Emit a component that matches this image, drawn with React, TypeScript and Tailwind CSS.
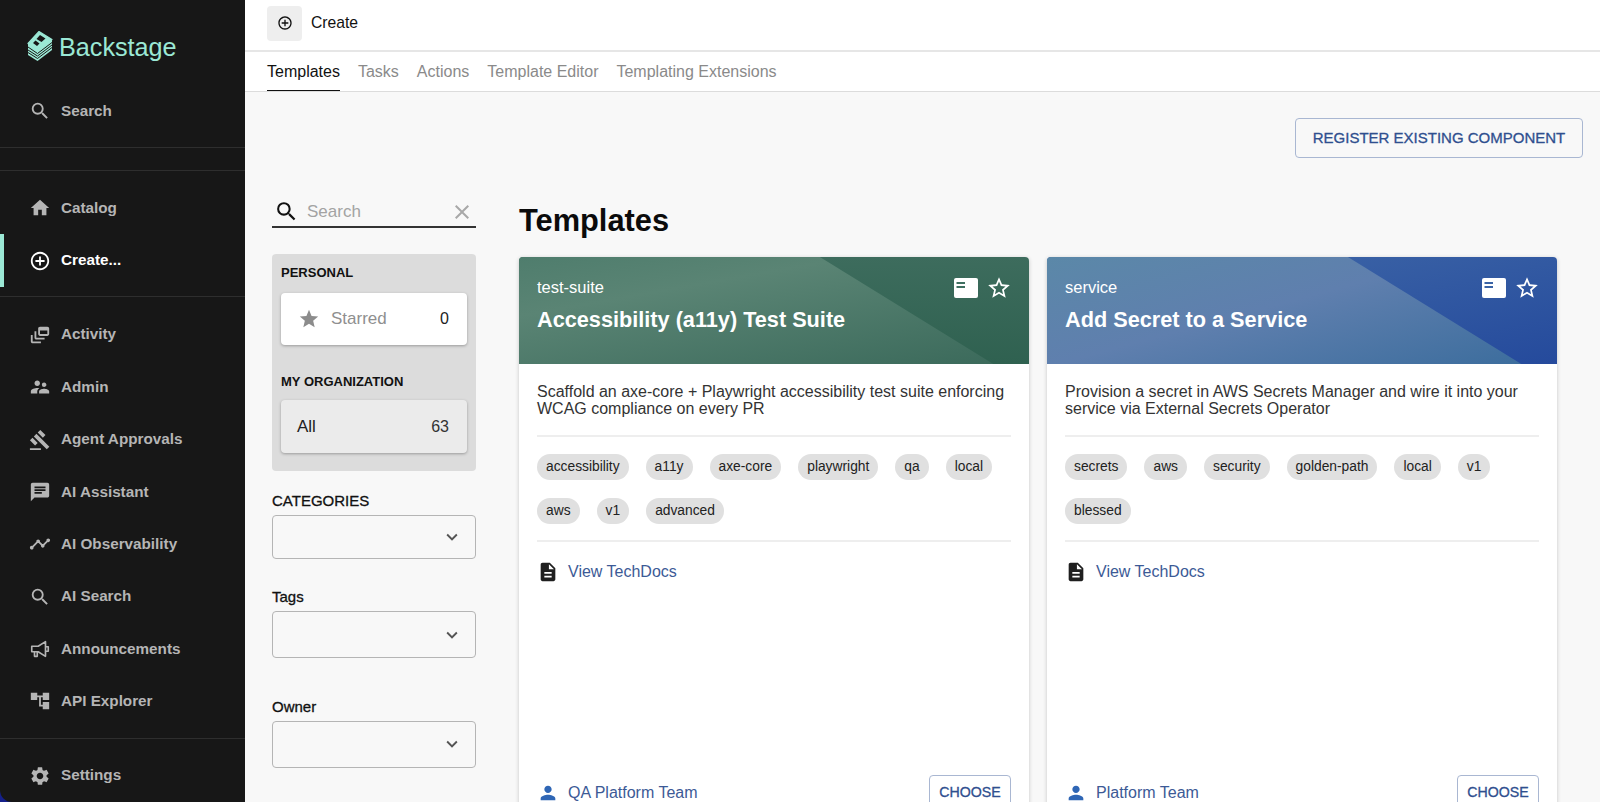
import React from "react";
import {
  MdAccountTree,
  MdAddCircleOutline,
  MdChat,
  MdClose,
  MdDescription,
  MdExpandMore,
  MdGavel,
  MdHome,
  MdOutlineDynamicFeed,
  MdPerson,
  MdSearch,
  MdSettings,
  MdStar,
  MdStarBorder,
  MdSupervisorAccount,
  MdTimeline,
} from "react-icons/md";

const BackstageLogo = () => (
  <svg viewBox="0 0 26 32" className="h-[32px] w-[26px]" fill="none" strokeLinejoin="round">
    {/* stacked discs */}
    <path d="M1 14 V25 L10.5 31 L25 20 V10 Z" fill="#9be8d5" />
    <path d="M1 17 L10.5 23.5 L25 12.5 M1 20 L10.5 26 L25 15 M1 22.5 L10.5 28.5 L25 17.5" stroke="#171717" strokeWidth="1" />
    {/* the B on top */}
    <path d="M1 13.5 L12 1.5 L25 9.5 L10.5 21.5 Z" fill="#9be8d5" stroke="#9be8d5" strokeWidth="1.2" />
    <path d="M9.5 9 L13 5 L18.5 8.5 L14.5 12 Z M6 13 L8.5 10.5 L12.5 13.5 L10 16 Z" fill="#171717" />
  </svg>
);

const MegaphoneIcon = () => (
  <svg viewBox="0 0 24 24" width="1em" height="1em" fill="none" stroke="currentColor" strokeWidth="1.8" strokeLinejoin="round">
    <path d="M3 9h7l8-5v16l-8-5H3z" />
    <path d="M6 15v5h3v-5M18 9.5h3v5h-3" />
  </svg>
);

type NavProps = { icon: React.ReactNode; label: string; active?: boolean };

const NavItem = ({ icon, label, active }: NavProps) => (
  <div className={`relative flex h-[52.6px] items-center pl-[29px] ${active ? "text-white" : "text-[#b5b5b5]"}`}>
    {active && <div className="absolute left-0 top-0 h-full w-1 bg-[#9be8d5]" />}
    <span className="flex w-[32px] text-[22px]">{icon}</span>
    <span className="text-[15.25px] font-bold">{label}</span>
  </div>
);

const Sidebar = () => (
  <aside className="flex h-full w-[245px] shrink-0 flex-col overflow-hidden rounded-bl-[12px] bg-[#171717]">
    <div className="flex h-[85px] items-start gap-[6px] pl-[27px] pt-[30px]">
      <BackstageLogo />
      <span className="text-[25.2px] leading-[34px] text-[#9be8d5]">Backstage</span>
    </div>
    <NavItem icon={<MdSearch />} label="Search" />
    <div className="mt-[10px] h-[24px] border-y border-[#2e2e2e]" />
    <div className="h-[11px]" />
    <NavItem icon={<MdHome />} label="Catalog" />
    <NavItem icon={<MdAddCircleOutline />} label="Create..." active />
    <div className="mb-[12px] mt-[9px] border-t border-[#2e2e2e]" />
    <NavItem icon={<MdOutlineDynamicFeed />} label="Activity" />
    <NavItem icon={<MdSupervisorAccount />} label="Admin" />
    <NavItem icon={<MdGavel />} label="Agent Approvals" />
    <NavItem icon={<MdChat />} label="AI Assistant" />
    <NavItem icon={<MdTimeline />} label="AI Observability" />
    <NavItem icon={<MdSearch />} label="AI Search" />
    <NavItem icon={<MegaphoneIcon />} label="Announcements" />
    <NavItem icon={<MdAccountTree />} label="API Explorer" />
    <div className="mb-[11px] mt-[10px] border-t border-[#2e2e2e]" />
    <NavItem icon={<MdSettings />} label="Settings" />
  </aside>
);

const tabs = ["Tasks", "Actions", "Template Editor", "Templating Extensions"];

const TopBars = () => (
  <>
    <div className="flex h-[52px] shrink-0 items-center gap-[9px] border-b-2 border-[#e6e6e6] bg-white pb-[4px] pl-[22px]">
      <div className="flex h-[35px] w-[35px] items-center justify-center rounded bg-[#eeeeee] text-[16px] text-[#111]">
        <MdAddCircleOutline />
      </div>
      <span className="text-[15.7px] text-[#111]">Create</span>
    </div>
    <div className="flex h-[40px] shrink-0 gap-[18px] border-b border-[#dcdcdc] bg-white pl-[22px] pt-[1px] text-[16px]">
      <div className="flex items-center border-b border-[#111] text-[#111]">Templates</div>
      {tabs.map((t) => (
        <div key={t} className="flex items-center text-[#8a8a8a]">
          {t}
        </div>
      ))}
    </div>
  </>
);

const Dropdown = ({ label, tall }: { label: string; tall?: boolean }) => (
  <div>
    <div className="mb-[5px] text-[15px] leading-[18px] text-[#111] [-webkit-text-stroke:0.3px]">{label}</div>
    <div className={`flex items-center justify-end rounded border border-[#b5b5b5] pr-[12px] text-[22px] text-[#555] ${tall ? "h-[47px]" : "h-[44px]"}`}>
      <MdExpandMore />
    </div>
  </div>
);

const Filters = () => (
  <div className="w-[204px] shrink-0">
    <div className="flex h-[30px] items-center border-b-2 border-[#333] pb-[1px] pl-[2px] pr-[2px]">
      <MdSearch className="text-[25px] text-[#111]" />
      <span className="ml-[8px] flex-1 text-[17px] text-[#a3a3a3]">Search</span>
      <MdClose className="text-[24px] text-[#a8a8a8]" />
    </div>
    <div className="mt-[26px] rounded bg-[#dcdcdc] px-[9px] pb-[18px] pt-[11px]">
      <div className="text-[13px] font-bold leading-[16px] text-[#111]">PERSONAL</div>
      <div className="mt-[12px] flex h-[52px] items-center rounded bg-white pl-[17px] pr-[18px] shadow-[0_1px_3px_rgba(0,0,0,0.3)]">
        <MdStar className="text-[22px] text-[#8c8c8c]" />
        <span className="ml-[11px] flex-1 text-[17px] text-[#8f8f8f]">Starred</span>
        <span className="text-[16px] text-[#222]">0</span>
      </div>
      <div className="mt-[29px] text-[13px] font-bold leading-[16px] text-[#111]">MY ORGANIZATION</div>
      <div className="mt-[10px] flex h-[53px] items-center rounded bg-[#ebebeb] pl-[16px] pr-[18px] shadow-[0_1px_3px_rgba(0,0,0,0.3)]">
        <span className="flex-1 text-[17px] text-[#222]">All</span>
        <span className="text-[16px] text-[#333]">63</span>
      </div>
    </div>
    <div className="mt-[21px]">
      <Dropdown label="CATEGORIES" />
    </div>
    <div className="mt-[29px]">
      <Dropdown label="Tags" tall />
    </div>
    <div className="mt-[39.5px]">
      <Dropdown label="Owner" tall />
    </div>
  </div>
);

type CardProps = {
  kind: string;
  title: string;
  desc: string[];
  chips: string[][];
  owner: string;
  gradient: string;
  shine: string;
  accent: string;
};

const Card = ({ kind, title, desc, chips, owner, gradient, shine, accent }: CardProps) => (
  <div className="flex h-[580px] flex-col overflow-hidden rounded bg-white shadow-[0_1px_4px_rgba(0,0,0,0.2)]">
    <div className={`relative h-[107px] shrink-0 overflow-hidden px-[18px] pt-[20px] text-white ${gradient}`}>
      <div className={`absolute left-0 top-0 h-full w-full ${shine} [clip-path:polygon(0_0,59%_0,93%_100%,0_100%)]`} />
      <div className="relative flex justify-between">
        <div>
          <div className="text-[16.5px] leading-[20px]">{kind}</div>
          <div className="mt-[9px] text-[21.7px] font-bold leading-[28px]">{title}</div>
        </div>
        <div className="-mr-[1px] flex h-[22px] items-center gap-[8px]">
          <svg viewBox="0 0 24 20" className="h-[20px] w-[24px]">
            <rect width="24" height="20" rx="2" fill="#fff" />
            <path d="M2.5 5h8.5M2.5 9h8.5" stroke={accent} strokeWidth="2" />
          </svg>
          <MdStarBorder className="text-[26px]" />
        </div>
      </div>
    </div>
    <div className="flex flex-1 flex-col px-[18px]">
      <div className="mt-[19px] text-[16px] leading-[17px] text-[#333]">
        {desc.map((d) => (
          <div key={d}>{d}</div>
        ))}
      </div>
      <div className="mt-[18px] border-t-2 border-[#eeeeee]" />
      <div className="mt-[17px] flex flex-col gap-[18px]">
        {chips.map((row) => (
          <div key={row[0]} className="flex gap-[17px]">
            {row.map((c) => (
              <span key={c} className="flex h-[26px] items-center rounded-full bg-[#e0e0e0] px-[9px] text-[13.8px] text-[#222]">
                {c}
              </span>
            ))}
          </div>
        ))}
      </div>
      <div className="mt-[16px] border-t-2 border-[#eeeeee]" />
      <div className="mt-[18px] flex items-center gap-[9px] text-[16px] text-[#3c5a96]">
        <MdDescription className="text-[22px] text-[#1f1f1f]" />
        View TechDocs
      </div>
      <div className="mt-[191px] flex items-center justify-between text-[16px] text-[#3c5a96]">
        <div className="flex items-center gap-[9px]">
          <MdPerson className="text-[22px] text-[#2f66b5]" />
          {owner}
        </div>
        <div className="flex h-[36px] w-[82px] items-center justify-center rounded border border-[#a9b7d2] text-[14.2px] text-[#2f4f8f] [-webkit-text-stroke:0.3px]">CHOOSE</div>
      </div>
    </div>
  </div>
);

export default function App() {
  return (
    <div className="flex h-[802px] w-[1600px] overflow-hidden bg-[#15208a] [font-family:'Liberation_Sans',Arial,sans-serif]">
      <Sidebar />
      <main className="flex min-w-0 flex-1 flex-col overflow-hidden bg-[#f8f8f8]">
        <TopBars />
        <div className="flex justify-end pr-[17px] pt-[26px]">
          <div className="flex h-[40px] w-[288px] items-center justify-center rounded border border-[#a9b7d2] text-[15px] text-[#2f4f8f] [-webkit-text-stroke:0.3px]">
            REGISTER EXISTING COMPONENT
          </div>
        </div>
        <div className="flex gap-[43px] pl-[27px] pr-[43px] pt-[40px]">
          <Filters />
          <div className="min-w-0 flex-1">
            <h1 className="mt-[5px] text-[30.8px] font-bold leading-[36px] text-[#0b0b0b]">Templates</h1>
            <div className="mt-[18px] grid grid-cols-2 gap-[18px]">
              <Card
                kind="test-suite"
                title="Accessibility (a11y) Test Suite"
                desc={["Scaffold an axe-core + Playwright accessibility test suite enforcing", "WCAG compliance on every PR"]}
                chips={[["accessibility", "a11y", "axe-core", "playwright", "qa", "local"], ["aws", "v1", "advanced"]]}
                owner="QA Platform Team"
                gradient="bg-gradient-to-b from-[#3d6c5d] to-[#2f6150]"
                shine="bg-[linear-gradient(170deg,#4f7d6d_0%,#5a8474_30%,#3a695a_100%)]"
                accent="#3f6f60"
              />
              <Card
                kind="service"
                title="Add Secret to a Service"
                desc={["Provision a secret in AWS Secrets Manager and wire it into your", "service via External Secrets Operator"]}
                chips={[["secrets", "aws", "security", "golden-path", "local", "v1"], ["blessed"]]}
                owner="Platform Team"
                gradient="bg-gradient-to-br from-[#4169a8] to-[#254a9c]"
                shine="bg-[linear-gradient(165deg,#5b88a8_0%,#5f7fae_45%,#3a6c9c_100%)]"
                accent="#3a63a5"
              />
            </div>
          </div>
        </div>
      </main>
    </div>
  );
}
